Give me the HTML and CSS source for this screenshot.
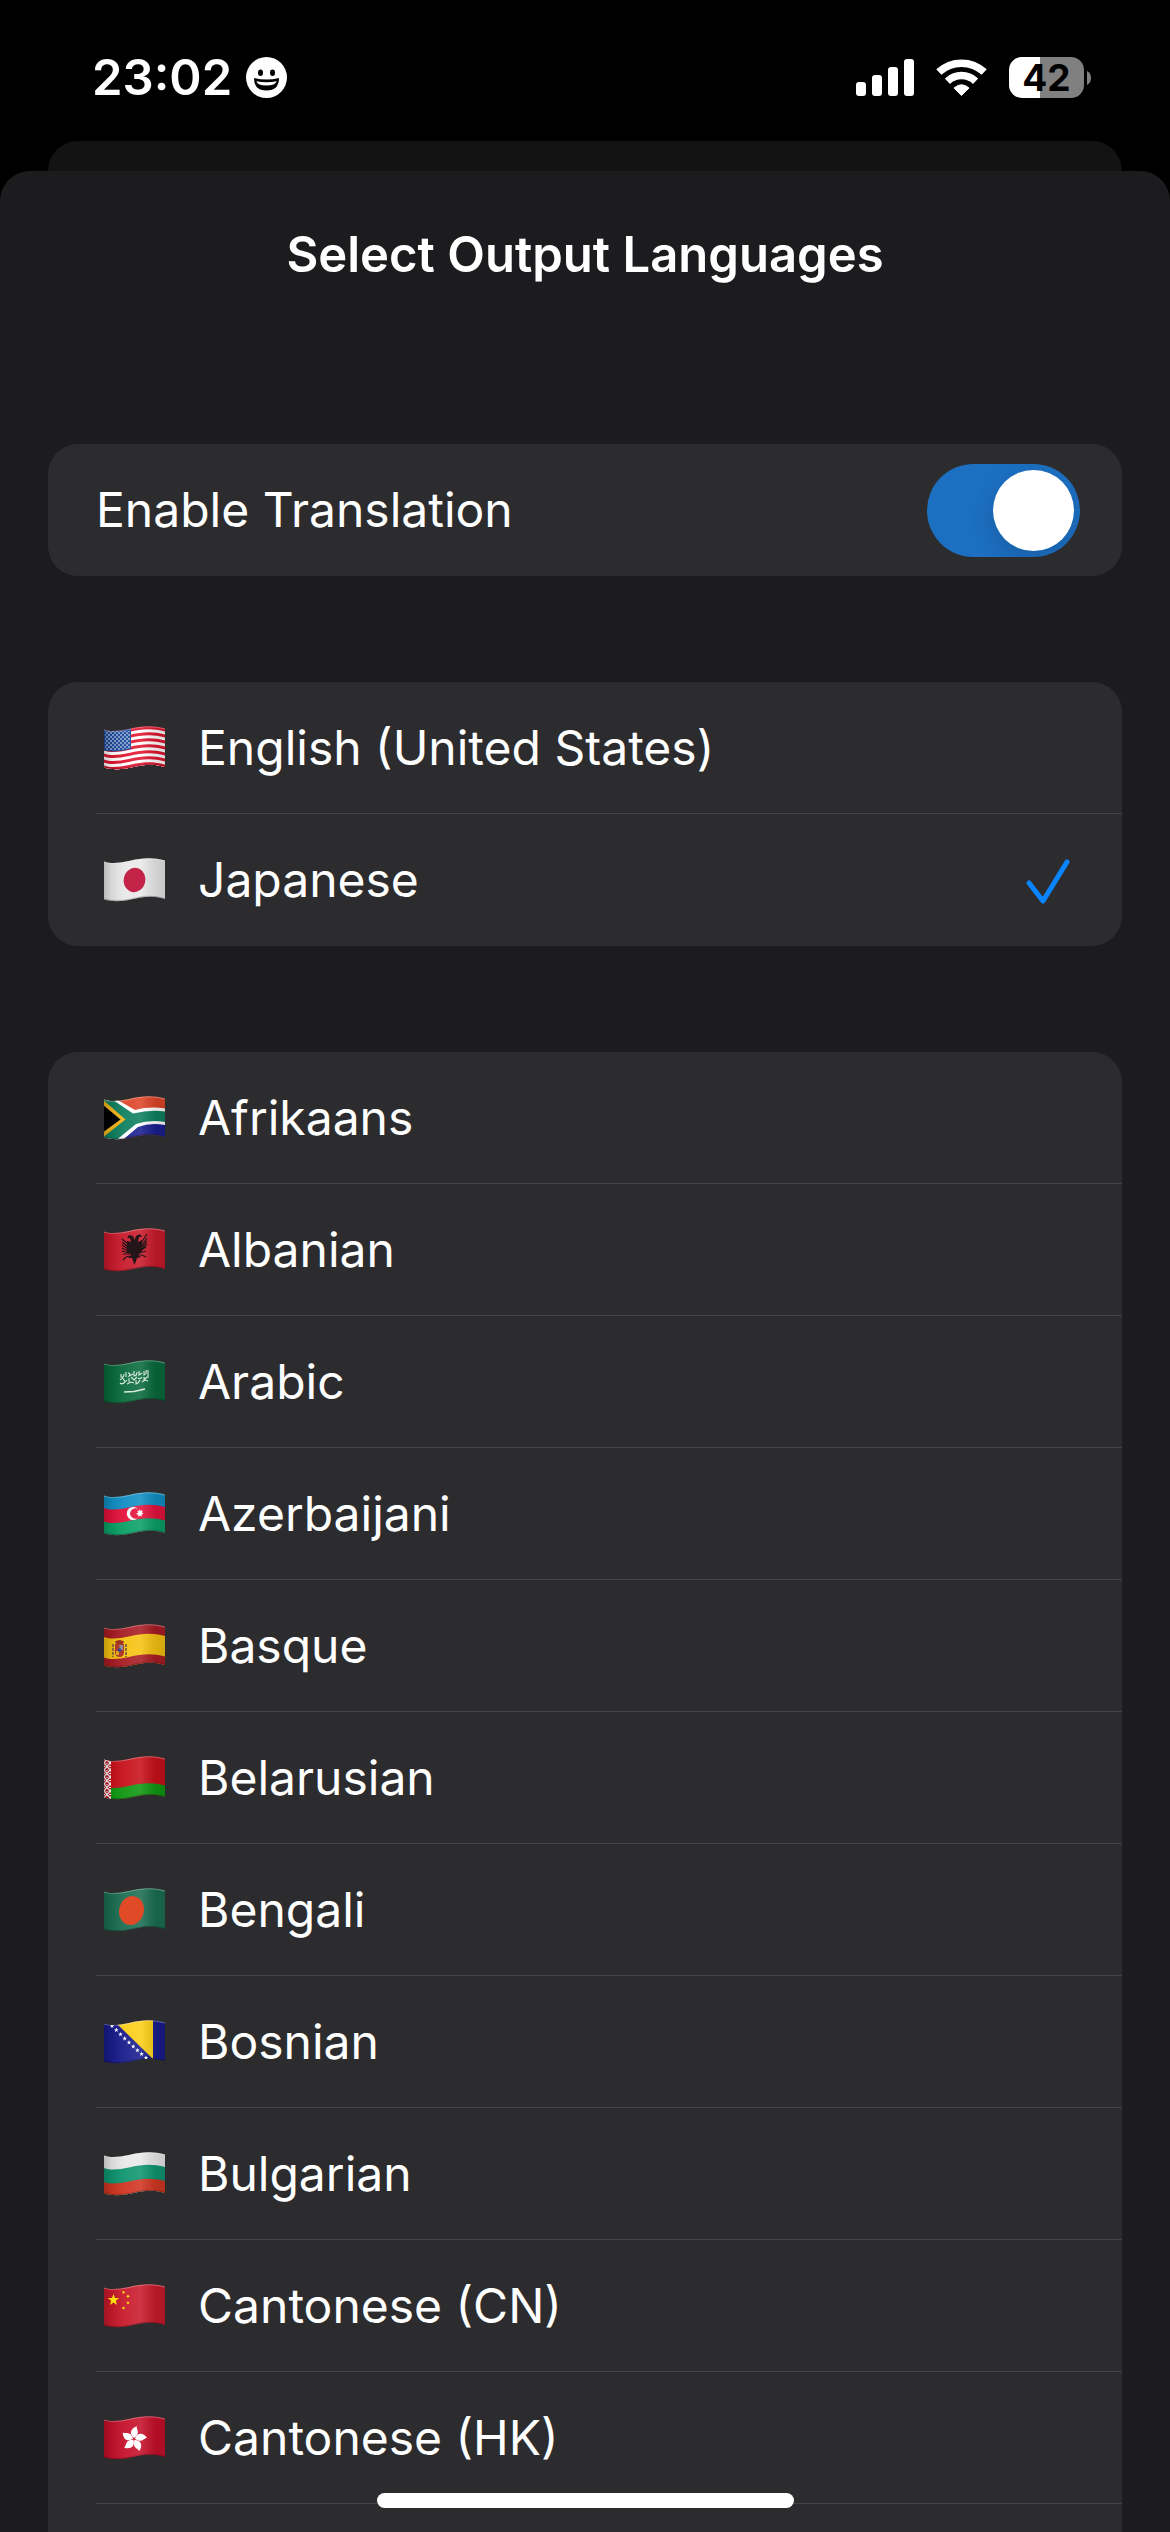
FILE: index.html
```html
<!DOCTYPE html>
<html lang="en">
<head>
  <meta charset="UTF-8">
  <meta name="viewport" content="width=device-width, initial-scale=1.0">
  <title>Select Output Languages</title>
  <link rel="stylesheet" href="styles.css">
</head>
<body>
  <!-- shared flag parts -->
  <svg class="defs" width="0" height="0" aria-hidden="true">
    <defs>
      <clipPath id="cloth">
        <path d="M0 3.5C7 6 15 5 25 3C38 0 48 -1 61 2.5V41C48 37 38 39 27 41.5C16 44 8 43.5 0 41.5Z"/>
      </clipPath>
      <linearGradient id="foldGradient">
        <stop offset="0" stop-color="#000" stop-opacity=".2"/>
        <stop offset=".12" stop-color="#000" stop-opacity=".08"/>
        <stop offset=".35" stop-color="#fff" stop-opacity=".06"/>
        <stop offset=".6" stop-color="#fff" stop-opacity=".12"/>
        <stop offset=".85" stop-color="#000" stop-opacity=".1"/>
        <stop offset="1" stop-color="#000" stop-opacity=".14"/>
      </linearGradient>
      <path id="wave" d="M0 0C7 2.5 15 1.5 25 -.5C38 -3.5 48 -4.5 61 -1V60H0Z"/>
      <g id="folds">
        <path fill="url(#foldGradient)" d="M0 0H61V44H0Z"/>
        <path fill="none" stroke="#fff" stroke-opacity=".3" stroke-width="2" d="M0 3.5C7 6 15 5 25 3C38 0 48 -1 61 2.5"/>
        <path fill="none" stroke="#000" stroke-opacity=".22" stroke-width="2" d="M61 41C48 37 38 39 27 41.5C16 44 8 43.5 0 41.5"/>
      </g>
      <path id="star" d="M0 -6L1.5 -2H5.7L2.3 .7L3.6 4.9L0 2.4L-3.6 4.9L-2.3 .7L-5.7 -2H-1.5Z"/>
      <pattern id="usStars" width="4" height="4" patternUnits="userSpaceOnUse">
        <circle cx="1" cy="1" r=".8" fill="#fff"/>
        <circle cx="3" cy="3" r=".8" fill="#fff"/>
      </pattern>
      <pattern id="ornament" width="6" height="7" patternUnits="userSpaceOnUse">
        <path fill="none" stroke="#fff" stroke-width="1.2" d="M0 0L6 7M6 0L0 7M3 0V1M0 3.5H1M5 3.5H6"/>
      </pattern>
      <path id="petal" d="M0 -1C-6 -4 -5 -10 1 -13C1 -9 6 -7 0 -1Z"/>
    </defs>
  </svg>

  <div class="status">
    <div class="status-left">
      <span class="time">23:02</span>
      <svg width="41" height="41" viewBox="0 0 41 41" aria-hidden="true">
        <circle cx="20.5" cy="20.5" r="20.5" fill="#fff"/>
        <ellipse cx="14.5" cy="15.7" rx="2.5" ry="3.2"/>
        <ellipse cx="26.5" cy="15.7" rx="2.5" ry="3.2"/>
        <path d="M8 21Q20.5 24 33 21Q33 33.5 20.5 33.5Q8 33.5 8 21Z"/>
        <path fill="#fff" d="M10.3 24.3Q20.5 26.3 30.7 24.3Q29.5 28.5 20.5 28.5Q11.5 28.5 10.3 24.3Z"/>
      </svg>
    </div>
    <div class="status-right">
      <svg width="58" height="37" viewBox="0 0 58 37" fill="#fff" aria-hidden="true">
        <rect x="0" y="23" width="10" height="14" rx="3"/>
        <rect x="16" y="16" width="10" height="21" rx="3"/>
        <rect x="32" y="8" width="10" height="29" rx="3"/>
        <rect x="48" y="0" width="10" height="37" rx="3"/>
      </svg>
      <svg width="51" height="37" viewBox="0 0 51 37" fill="none" stroke="#fff" stroke-width="7.5" aria-hidden="true">
        <path d="M2.8 13.1A33.2 33.2 0 0 1 48.2 13.1"/>
        <path d="M11.4 22.2A20.5 20.5 0 0 1 39.6 22.2"/>
        <path fill="#fff" stroke-width="1" stroke-linejoin="round" d="M25.5 36.5L18 29Q25.5 22.5 33 29Z"/>
      </svg>
      <div class="battery">
        <span class="battery-level">42</span>
        <svg width="4" height="14" viewBox="0 0 4 14" aria-hidden="true"><path fill="#808080" d="M0 0Q4 2 4 7T0 14Z"/></svg>
      </div>
    </div>
  </div>

  <div class="back-sheet"></div>

  <main class="sheet">
    <h1>Select Output Languages</h1>

    <div class="card">
      <label class="row toggle-row">
        <span>Enable Translation</span>
        <input type="checkbox" class="switch" role="switch" checked>
      </label>
    </div>

    <ul class="card">
      <li>
        <label class="row">
          <svg class="flag" viewBox="0 0 61 44" aria-hidden="true">
            <g clip-path="url(#cloth)">
              <path fill="#e0162f" d="M0 0H61V44H0Z"/>
              <use href="#wave" y="6.5" fill="#fff"/><use href="#wave" y="9.5" fill="#e0162f"/>
              <use href="#wave" y="12.5" fill="#fff"/><use href="#wave" y="15.5" fill="#e0162f"/>
              <use href="#wave" y="18.5" fill="#fff"/><use href="#wave" y="21.5" fill="#e0162f"/>
              <use href="#wave" y="24.5" fill="#fff"/><use href="#wave" y="27.5" fill="#e0162f"/>
              <use href="#wave" y="30.5" fill="#fff"/><use href="#wave" y="33.5" fill="#e0162f"/>
              <use href="#wave" y="36.5" fill="#fff"/><use href="#wave" y="39.5" fill="#e0162f"/>
              <path fill="#1a4a9c" d="M0 0H27V23Q13 27 0 24.5Z"/>
              <path fill="url(#usStars)" d="M1 5H26V22Q13 26 1 23.5Z"/>
              <use href="#folds"/>
            </g>
          </svg>
          <span>English (United States)</span>
          <input type="checkbox" class="tick">
        </label>
      </li>
      <li>
        <label class="row">
          <svg class="flag" viewBox="0 0 61 44" aria-hidden="true">
            <g clip-path="url(#cloth)">
              <path fill="#e9e9ea" d="M0 0H61V44H0Z"/>
              <use href="#folds"/>
              <ellipse cx="30.5" cy="22" rx="10.8" ry="12.2" transform="rotate(12 30.5 22)" fill="#c42348"/>
            </g>
          </svg>
          <span>Japanese</span>
          <input type="checkbox" class="tick" checked>
        </label>
      </li>
    </ul>

    <ul class="card card-last">
      <li>
        <label class="row">
          <svg class="flag" viewBox="0 0 61 44" aria-hidden="true">
            <g clip-path="url(#cloth)">
              <path fill="#dd4528" d="M0 0H61V44H0Z"/>
              <use href="#wave" y="26" fill="#1a1e90"/>
              <path fill="#fff" d="M12 3L31 14Q46 10 61 12.5V29Q46 26 34 31L15 47H-2V-2H4Z"/>
              <path fill="#0f8060" d="M9 4L29 17.5Q46 13.5 61 15.5V26Q46 23.5 32 28L10 46H-2V-2H0Z"/>
              <path fill="#f6b71c" d="M-2 3L21.5 23.5L-2 42Z"/>
              <path d="M-2 8L16.5 23.5L-2 37Z"/>
              <use href="#folds"/>
            </g>
          </svg>
          <span>Afrikaans</span>
          <input type="checkbox" class="tick">
        </label>
      </li>
      <li>
        <label class="row">
          <svg class="flag" viewBox="0 0 61 44" aria-hidden="true">
            <g clip-path="url(#cloth)">
              <path fill="#c91a2b" d="M0 0H61V44H0Z"/>
              <use href="#folds"/>
              <path fill="#241518" d="M30.5 12L29 8L25 7L23 10L26 10L27 14L23 13V24L27 27L24 30L28 30L29 33L30.5 37L32 33L33 30L37 29L34 27L38 23V12L34 14L35 9L38 9L36 6L32 8Z"/>
              <path fill="none" stroke="#241518" stroke-width="1.2" d="M18 11L24 16M18 14L24 19M18 17L24 21M18 20L24 23M18 23L25 25M19 26L25 26M19 32L22 29L26 28M43 6L37 15M43 10L37 18M43 13L37 20M43 16L37 22M42 19L36 23M42 23L35 25M42 29L38 27L34 27"/>
            </g>
          </svg>
          <span>Albanian</span>
          <input type="checkbox" class="tick">
        </label>
      </li>
      <li>
        <label class="row">
          <svg class="flag" viewBox="0 0 61 44" aria-hidden="true">
            <g clip-path="url(#cloth)">
              <path fill="#096a3c" d="M0 0H61V44H0Z"/>
              <use href="#folds"/>
              <g fill="none" stroke="#dcebe2" stroke-width="1.1">
                <path d="M17 14V17Q20 18 20 14M22 12V17M24 13Q27 13 25 16L29 14M30 11V16Q33 16 33 12M35 11V15L38 13M40 11V15Q43 14 42 10M44 10V18"/>
                <path d="M16 20Q19 17 20 20T23 20M25 18V22M27 17L30 20L33 17M34 18Q36 20 38 17M40 17V20L43 17M16 23Q18 25 21 22M23 24L27 22L30 23M32 20V24Q35 23 36 20M38 22L41 20L44 21"/>
                <path stroke-width="1.4" d="M20 32L30 31.5L41 29"/>
              </g>
            </g>
          </svg>
          <span>Arabic</span>
          <input type="checkbox" class="tick">
        </label>
      </li>
      <li>
        <label class="row">
          <svg class="flag" viewBox="0 0 61 44" aria-hidden="true">
            <g clip-path="url(#cloth)">
              <path fill="#108fc4" d="M0 0H61V44H0Z"/>
              <use href="#wave" y="16" fill="#e4123c"/>
              <use href="#wave" y="29.5" fill="#0aa066"/>
              <use href="#folds"/>
              <path fill="#fff" d="M34 17A6.5 6.5 0 1 0 34 26A5.2 5.2 0 1 1 34 17Z"/>
              <path fill="#fff" d="M35.5 17L36.5 19L38.5 18L38 20.5L39.5 21.5L37.5 22.5L38 24.5L36 23.5L34.5 25L34.3 22.8L32 22L34 20.7L33.5 18.5L35 19Z"/>
            </g>
          </svg>
          <span>Azerbaijani</span>
          <input type="checkbox" class="tick">
        </label>
      </li>
      <li>
        <label class="row">
          <svg class="flag" viewBox="0 0 61 44" aria-hidden="true">
            <g clip-path="url(#cloth)">
              <path fill="#a81c24" d="M0 0H61V44H0Z"/>
              <use href="#wave" y="13" fill="#f5c211"/>
              <use href="#wave" y="33.5" fill="#a81c24"/>
              <use href="#folds"/>
              <path fill="#b0392e" d="M11 20H20V28Q20 33 15.5 33T11 28Z"/>
              <path fill="#8c8f99" d="M15.5 21H19V26H15.5Z"/>
              <path fill="#dba319" d="M12 27H15V31H12Z"/>
              <circle cx="15.5" cy="26" r="1.8" fill="#2b4a9a"/>
              <path fill="#a03420" d="M11 17.5Q15.5 14.5 20 17.5L19 20H12Z"/>
              <path fill="none" stroke="#8b6a3a" stroke-width="2" stroke-dasharray="3 1" d="M9 20V33M22 20V33"/>
            </g>
          </svg>
          <span>Basque</span>
          <input type="checkbox" class="tick">
        </label>
      </li>
      <li>
        <label class="row">
          <svg class="flag" viewBox="0 0 61 44" aria-hidden="true">
            <g clip-path="url(#cloth)">
              <path fill="#c8101a" d="M0 0H61V44H0Z"/>
              <use href="#wave" y="30.5" fill="#0f9812"/>
              <path fill="#c0202a" d="M0 0H7V44H0Z"/>
              <path fill="url(#ornament)" d="M0 0H7V44H0Z"/>
              <use href="#folds"/>
            </g>
          </svg>
          <span>Belarusian</span>
          <input type="checkbox" class="tick">
        </label>
      </li>
      <li>
        <label class="row">
          <svg class="flag" viewBox="0 0 61 44" aria-hidden="true">
            <g clip-path="url(#cloth)">
              <path fill="#1c6e53" d="M0 0H61V44H0Z"/>
              <use href="#folds"/>
              <ellipse cx="27.5" cy="22.5" rx="12.3" ry="14.5" transform="rotate(15 27.5 22.5)" fill="#e04a26"/>
            </g>
          </svg>
          <span>Bengali</span>
          <input type="checkbox" class="tick">
        </label>
      </li>
      <li>
        <label class="row">
          <svg class="flag" viewBox="0 0 61 44" aria-hidden="true">
            <g clip-path="url(#cloth)">
              <path fill="#191c8c" d="M0 0H61V44H0Z"/>
              <path fill="#fbcf16" d="M13 4L14 -2H49V39Z"/>
              <use href="#folds"/>
              <g fill="#fff">
                <use href="#star" transform="translate(8 6) scale(.4)"/>
                <use href="#star" transform="translate(12.3 10) scale(.4)"/>
                <use href="#star" transform="translate(16.5 14.3) scale(.4)"/>
                <use href="#star" transform="translate(20.7 18.5) scale(.4)"/>
                <use href="#star" transform="translate(25 22.5) scale(.4)"/>
                <use href="#star" transform="translate(29.2 26.5) scale(.4)"/>
                <use href="#star" transform="translate(33.4 30.3) scale(.4)"/>
                <use href="#star" transform="translate(37.6 34) scale(.4)"/>
                <use href="#star" transform="translate(42 37.8) scale(.4)"/>
              </g>
            </g>
          </svg>
          <span>Bosnian</span>
          <input type="checkbox" class="tick">
        </label>
      </li>
      <li>
        <label class="row">
          <svg class="flag" viewBox="0 0 61 44" aria-hidden="true">
            <g clip-path="url(#cloth)">
              <path fill="#e9e9e9" d="M0 0H61V44H0Z"/>
              <use href="#wave" y="16" fill="#0f9570"/>
              <use href="#wave" y="30" fill="#d13521"/>
              <use href="#folds"/>
            </g>
          </svg>
          <span>Bulgarian</span>
          <input type="checkbox" class="tick">
        </label>
      </li>
      <li>
        <label class="row">
          <svg class="flag" viewBox="0 0 61 44" aria-hidden="true">
            <g clip-path="url(#cloth)">
              <path fill="#c91a2b" d="M0 0H61V44H0Z"/>
              <use href="#folds"/>
              <g fill="#fbdf10">
                <use href="#star" transform="translate(9.5 16)"/>
                <use href="#star" transform="translate(19.5 8.3) rotate(20) scale(.33)"/>
                <use href="#star" transform="translate(24 12.3) rotate(40) scale(.33)"/>
                <use href="#star" transform="translate(24 19) scale(.33)"/>
                <use href="#star" transform="translate(19.5 24) rotate(20) scale(.33)"/>
              </g>
            </g>
          </svg>
          <span>Cantonese (CN)</span>
          <input type="checkbox" class="tick">
        </label>
      </li>
      <li>
        <label class="row">
          <svg class="flag" viewBox="0 0 61 44" aria-hidden="true">
            <g clip-path="url(#cloth)">
              <path fill="#c5102a" d="M0 0H61V44H0Z"/>
              <use href="#folds"/>
              <g fill="#fff" transform="translate(30 23)">
                <use href="#petal" transform="rotate(8)"/>
                <use href="#petal" transform="rotate(80)"/>
                <use href="#petal" transform="rotate(152)"/>
                <use href="#petal" transform="rotate(224)"/>
                <use href="#petal" transform="rotate(296)"/>
              </g>
            </g>
          </svg>
          <span>Cantonese (HK)</span>
          <input type="checkbox" class="tick">
        </label>
      </li>
    </ul>
  </main>

  <div class="home-indicator"></div>
</body>
</html>
```

FILE: styles.css
```css
* {
  box-sizing: border-box;
}

body {
  margin: 0;
  min-height: 100vh;
  display: flex;
  flex-direction: column;
  background: #000;
  color: #fff;
  font-family: Inter, "Liberation Sans", sans-serif;
  font-size: 48px;
  line-height: 60px;
}

.defs {
  position: absolute;
}

/* status bar */
.status {
  display: flex;
  justify-content: space-between;
  align-items: center;
  height: 141px;
  padding: 14px 79px 0 92px;
}

.status-left,
.status-right,
.battery {
  display: flex;
  align-items: center;
}

.status-left {
  gap: 14px;
}

.status-right {
  gap: 22px;
}

.time {
  font-size: 49px;
  font-weight: 600;
}

.battery {
  gap: 3px;
}

.battery-level {
  width: 75px;
  height: 41px;
  border-radius: 13px;
  background: linear-gradient(to right, #fff 42%, #808080 42%);
  color: #000;
  font-size: 37px;
  font-weight: 700;
  line-height: 41px;
  text-align: center;
}

/* sheets */
.back-sheet {
  height: 30px;
  margin: 0 48px;
  border-radius: 30px 30px 0 0;
  background: #131313;
}

.sheet {
  flex: 1;
  display: flex;
  flex-direction: column;
  gap: 106px;
  padding: 54px 48px 0;
  border-radius: 30px 30px 0 0;
  background: #1c1c1e;
}

h1 {
  margin: 0 0 53px;
  font-size: 49px;
  font-weight: 600;
  line-height: 60px;
  text-align: center;
}

.card {
  margin: 0;
  padding: 0;
  list-style: none;
  border-radius: 30px;
  background: #2c2c2e;
}

.card-last {
  flex: 1;
  border-radius: 30px 30px 0 0;
}

.card li {
  height: 132px;
  margin-left: 48px;
  border-bottom: 1px solid #434346;
}

.card:not(.card-last) li:last-child {
  border-bottom: none;
}

.row {
  display: flex;
  align-items: center;
  gap: 33px;
  height: 100%;
  padding: 0 49px 0 8px;
}

.toggle-row {
  justify-content: space-between;
  height: 132px;
  padding: 0 42px 0 48px;
}

.flag {
  width: 61px;
  height: 44px;
}

/* controls */
.switch {
  appearance: none;
  display: flex;
  width: 153px;
  height: 93px;
  margin: 0;
  padding: 6px;
  border-radius: 47px;
  background: #39393d;
  overflow: hidden;
}

.switch:checked {
  justify-content: flex-end;
  background: #1c6fc1;
}

.switch::before {
  content: "";
  width: 81px;
  height: 81px;
  border-radius: 50%;
  background: #fff;
  box-shadow: 0 9px 24px rgba(0, 0, 0, 0.15);
}

.tick {
  appearance: none;
  width: 50px;
  height: 50px;
  margin: 0 0 0 auto;
}

.tick:checked {
  background: url("data:image/svg+xml,%3Csvg xmlns='http://www.w3.org/2000/svg' viewBox='0 0 50 50'%3E%3Cpath d='M6 28L20 46L44 7' fill='none' stroke='%230a84ff' stroke-width='5' stroke-linecap='round' stroke-linejoin='round'/%3E%3C/svg%3E") center no-repeat;
}

.home-indicator {
  position: fixed;
  bottom: 24px;
  left: 50%;
  width: 417px;
  height: 15px;
  margin-left: -208px;
  border-radius: 8px;
  background: #fff;
}
```
